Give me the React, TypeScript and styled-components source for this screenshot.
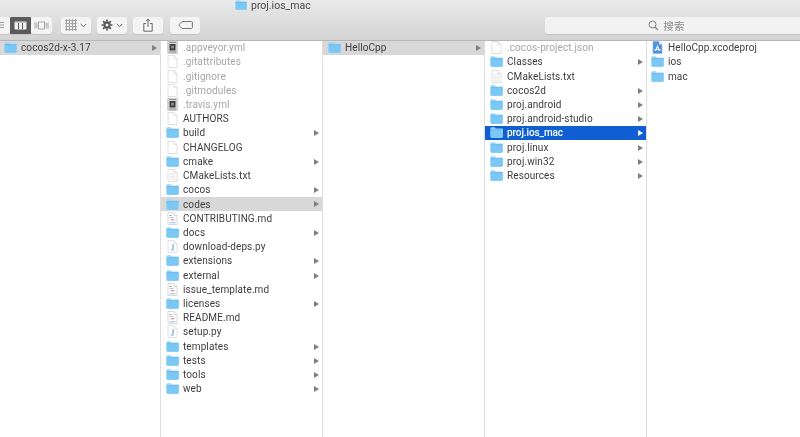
import React from "react";
import styled, { createGlobalStyle } from "styled-components";

const Global = createGlobalStyle`
  html, body { margin: 0; padding: 0; background: #fff; }
  body { font-family: Roboto, "Liberation Sans", Arial, "Noto Sans CJK SC", sans-serif; }
`;

const Win = styled.div`
  width: 800px; height: 437px; overflow: hidden; display: flex; flex-direction: column; background: #fff;
  filter: blur(.3px);
`;
const Toolbar = styled.header`
  height: 40.5px; flex: none; box-sizing: border-box; border-bottom: 1px solid #b8b7b8;
  background: linear-gradient(#ebeaeb, #d4d3d4);
  display: flex; flex-direction: column;
`;
const Title = styled.div`
  height: 16.5px; flex: none; display: flex; align-items: flex-start; gap: 4px; padding-left: 235px;
  font-size: 10.5px; line-height: 11px; color: #4a4a4a;
`;
const Tools = styled.div`
  display: flex; align-items: flex-start; height: 17.5px;
`;
const Btn = styled.div<{ $w: number; $ml: number; $active?: boolean; $start?: boolean }>`
  width: ${p => p.$w}px; margin-left: ${p => p.$ml}px; height: 17.5px; box-sizing: border-box;
  display: flex; align-items: center; justify-content: ${p => p.$start ? "flex-start" : "center"}; gap: 3px;
  border-radius: ${p => p.$active ? 1 : 3}px; background: ${p => p.$active ? "#5c5b5c" : "#f5f4f5"};
  box-shadow: 0 1px 0 #c4c3c4;
  color: #666;
`;
const Search = styled.div`
  margin-left: auto; width: 255px; height: 17.5px; border-radius: 3px 0 0 3px; background: #f3f2f3;
  box-shadow: 0 1px 0 #c4c3c4; box-sizing: border-box; padding-right: 12px;
  display: flex; align-items: center; justify-content: center; gap: 4px;
  font-size: 10.5px; color: #8a8a8a; letter-spacing: .3px;
`;
const Browser = styled.main`
  flex: 1; display: flex; min-height: 0;
`;
const Column = styled.section<{ $w: number }>`
  width: ${p => p.$w}px; flex: none; box-sizing: border-box; border-right: 1px solid #dedede;
  &:last-child { border-right: none; flex: 1; }
`;
const Row = styled.div<{ $state?: "sel" | "active"; $inset: number }>`
  height: 14.23px; display: flex; align-items: center; position: relative; box-sizing: border-box;
  padding-left: ${p => p.$inset}px; gap: 4px;
  background: ${p => p.$state === "sel" ? "#0f5fd3" : p.$state === "active" ? "#d8d8d8" : "transparent"};
`;
const Name = styled.span<{ $dim?: boolean; $sel?: boolean }>`
  font-size: 10px; line-height: 14px; letter-spacing: ${p => p.$sel ? "-.1px" : ".1px"}; white-space: nowrap;
  color: ${p => p.$sel ? "#fff" : p.$dim ? "#a6a6a6" : "#3d3d3d"};
  font-weight: ${p => p.$sel ? 500 : 400};
  position: relative; top: .5px;
`;
const Arrow = styled.i<{ $sel?: boolean }>`
  position: absolute; right: 3px; top: 4.5px; width: 0; height: 0;
  border-left: 5px solid ${p => p.$sel ? "#fff" : "#808080"};
  border-top: 3px solid transparent; border-bottom: 3px solid transparent;
`;

type Kind = "folder" | "doc" | "text" | "md" | "py" | "yml" | "xcode";

const FolderIcon = ({ w = 13, h = 11 }: { w?: number; h?: number }) => (
  <svg width={w} height={h} viewBox="0 0 13 11" style={{ flex: "none" }}>
    <path d="M.5 1.2C.5.6.9.3 1.4.3h3c.5 0 .7.2 1 .6l.4.6h6c.7 0 1.2.4 1.2 1.1v7c0 .7-.4 1.1-1.1 1.1H1.6C.9 10.7.5 10.3.5 9.6z" fill="#9ad5f7" />
    <path d="M.5 3h12v6.6c0 .7-.4 1.1-1.1 1.1H1.6C.9 10.7.5 10.3.5 9.6z" fill="#7cc8f5" />
    <rect x=".5" y="2.2" width="12" height="1" fill="#68baee" />
  </svg>
);

const Sheet = ({ children, stroke = "#d8d8d8" }: { children?: React.ReactNode; stroke?: string }) => (
  <svg width="11" height="13" viewBox="0 0 11 13" style={{ flex: "none", margin: "0 1px" }}>
    <path d="M1 .5h6l3 3v9H1z" fill="#fff" stroke={stroke} strokeWidth=".8" />
    <path d="M7 .5v3h3" fill="#f2f2f2" stroke={stroke} strokeWidth=".7" />
    {children}
  </svg>
);

const Icon = ({ kind }: { kind: Kind }) => {
  switch (kind) {
    case "folder": return <FolderIcon />;
    case "doc": return <Sheet />;
    case "text":
      return <Sheet><path d="M2.5 4.5h6M2.5 6h6M2.5 7.5h6M2.5 9h6M2.5 10.5h6" stroke="#e2e2e2" strokeWidth=".7" /></Sheet>;
    case "md":
      return <Sheet stroke="#cfcfcf"><path d="M2.5 3.5h2" stroke="#8a8a8a" strokeWidth=".9" /><path d="M2.5 5.5h4" stroke="#aab0c4" strokeWidth=".8" /><path d="M3 7l2.5 2L8 7z" fill="#d9a0b4" /><path d="M2.5 10.8h6" stroke="#8fb0dc" strokeWidth=".9" /></Sheet>;
    case "py":
      return <Sheet stroke="#d6dce2"><path d="M6 5v4.5c0 .8-.8 1-1.6.6" fill="none" stroke="#4a96d8" strokeWidth="1" /><path d="M5.6 4.6h1.2" stroke="#4a96d8" strokeWidth=".8" /></Sheet>;
    case "yml":
      return (
        <svg width="11" height="13" viewBox="0 0 11 13" style={{ flex: "none", margin: "0 1px" }}>
          <rect x=".8" y=".5" width="9.4" height="12" fill="#d6d6d6" stroke="#aaa" strokeWidth=".5" />
          <rect x="2.5" y="3" width="6" height="6.5" fill="#3e3e3e" />
          <rect x="4" y="4.8" width="3" height="2.6" fill="#8a8a8a" />
          <path d="M2 1.5h7M2 11h7" stroke="#777" strokeWidth=".7" />
        </svg>
      );
    case "xcode":
      return (
        <svg width="11" height="13" viewBox="0 0 11 13" style={{ flex: "none", margin: "0 1px" }}>
          <path d="M1 .5h6l3 3v9H1z" fill="#4d8fe0" stroke="#8db7ea" strokeWidth=".7" />
          <path d="M7 .5v3h3z" fill="#d9e8fa" />
          <path d="M5.5 3.5L3 10h1.2l1.3-3.6L6.8 10H8z" fill="#fff" />
          <path d="M2.2 8.5h6.6" stroke="#fff" strokeWidth=".7" />
        </svg>
      );
  }
};

type Entry = { n: string; k: Kind; dim?: boolean; arrow?: boolean; state?: "sel" | "active" };
const f = (n: string, state?: "sel" | "active"): Entry => ({ n, k: "folder", arrow: true, state });

const columns: { w: number; inset: number; rows: Entry[] }[] = [
  { w: 161, inset: 4, rows: [f("cocos2d-x-3.17", "active")] },
  {
    w: 162, inset: 5, rows: [
      { n: ".appveyor.yml", k: "yml", dim: true },
      { n: ".gitattributes", k: "doc", dim: true },
      { n: ".gitignore", k: "doc", dim: true },
      { n: ".gitmodules", k: "doc", dim: true },
      { n: ".travis.yml", k: "yml", dim: true },
      { n: "AUTHORS", k: "doc" },
      f("build"),
      { n: "CHANGELOG", k: "doc" },
      f("cmake"),
      { n: "CMakeLists.txt", k: "text" },
      f("cocos"),
      f("codes", "active"),
      { n: "CONTRIBUTING.md", k: "md" },
      f("docs"),
      { n: "download-deps.py", k: "py" },
      f("extensions"),
      f("external"),
      { n: "issue_template.md", k: "md" },
      f("licenses"),
      { n: "README.md", k: "md" },
      { n: "setup.py", k: "py" },
      f("templates"),
      f("tests"),
      f("tools"),
      f("web"),
    ],
  },
  { w: 162, inset: 5, rows: [f("HelloCpp", "active")] },
  {
    w: 162, inset: 5, rows: [
      { n: ".cocos-project.json", k: "doc", dim: true },
      f("Classes"),
      { n: "CMakeLists.txt", k: "text" },
      f("cocos2d"),
      f("proj.android"),
      f("proj.android-studio"),
      f("proj.ios_mac", "sel"),
      f("proj.linux"),
      f("proj.win32"),
      f("Resources"),
    ],
  },
  {
    w: 153, inset: 4, rows: [
      { n: "HelloCpp.xcodeproj", k: "xcode" },
      { n: "ios", k: "folder" },
      { n: "mac", k: "folder" },
    ],
  },
];

const Stroke = { fill: "none", stroke: "#666", strokeWidth: 1 };

export default function App() {
  return (
    <Win>
      <Global />
      <Toolbar>
        <Title><FolderIcon w={12} h={10} /><span>proj.ios_mac</span></Title>
        <Tools>
          <Btn $w={14} $ml={-4} $start>
            <svg width="8" height="8" viewBox="0 0 8 8"><path d="M0 1.5h8M0 4h8M0 6.5h8" {...Stroke} stroke="#999" /></svg>
          </Btn>
          <Btn $w={21} $ml={0} $active>
            <svg width="13" height="9" viewBox="0 0 13 9"><rect x=".5" y=".5" width="12" height="8" rx="1" fill="#f0f0f0" /><path d="M4.5 2v6M8.5 2v6" stroke="#5c5b5c" strokeWidth="1" /><path d="M1 1.5h11" stroke="#bbb" strokeWidth=".8" /></svg>
          </Btn>
          <Btn $w={21} $ml={0}>
            <svg width="15" height="9" viewBox="0 0 15 9"><rect x="4.5" y="1" width="6" height="7" {...Stroke} stroke="#a8a8a8" /><path d="M1 1.5v6M2.8 1.5v6M12.2 1.5v6M14 1.5v6" {...Stroke} stroke="#a8a8a8" /></svg>
          </Btn>
          <Btn $w={30} $ml={9}>
            <svg width="12" height="12" viewBox="0 0 12 12"><path d="M0 1.5h12M0 4.5h12M0 7.5h12M0 10.5h12M1.5 0v12M4.5 0v12M7.5 0v12M10.5 0v12" fill="none" stroke="#a8a8a8" strokeWidth="1.2" /></svg>
            <svg width="7" height="5" viewBox="0 0 7 5"><path d="M.8 1l2.7 2.7L6.2 1" {...Stroke} /></svg>
          </Btn>
          <Btn $w={30} $ml={6}>
            <svg width="12" height="12" viewBox="0 0 12 12"><circle cx="6" cy="6" r="2.6" fill="none" stroke="#555" strokeWidth="2.2" /><path d="M6 .5v2M6 9.5v2M.5 6h2M9.5 6h2M2.1 2.1l1.4 1.4M8.5 8.5l1.4 1.4M2.1 9.9l1.4-1.4M8.5 3.5l1.4-1.4" stroke="#555" strokeWidth="1.7" /></svg>
            <svg width="7" height="5" viewBox="0 0 7 5"><path d="M.8 1l2.7 2.7L6.2 1" {...Stroke} /></svg>
          </Btn>
          <Btn $w={30} $ml={6}>
            <svg width="10" height="14" viewBox="0 0 10 14"><path d="M3 5.5H.8v7.7h8.4V5.5H7" {...Stroke} /><path d="M5 9V1M3 3l2-2 2 2" {...Stroke} /></svg>
          </Btn>
          <Btn $w={30} $ml={7}>
            <svg width="15" height="8" viewBox="0 0 15 8"><path d="M4 .5h9.5c.5 0 .9.4.9.9v5.2c0 .5-.4.9-.9.9H4L.8 4z" {...Stroke} stroke="#777" /></svg>
          </Btn>
          <Search>
            <svg width="11" height="11" viewBox="0 0 11 11"><circle cx="4.5" cy="4.5" r="3.5" fill="none" stroke="#808080" strokeWidth="1" /><path d="M7 7l3.2 3.2" stroke="#808080" strokeWidth="1.2" /></svg>
            <span>搜索</span>
          </Search>
        </Tools>
      </Toolbar>
      <Browser>
        {columns.map((c, i) => (
          <Column key={i} $w={c.w}>
            {c.rows.map(r => (
              <Row key={r.n} $state={r.state} $inset={c.inset}>
                <Icon kind={r.k} />
                <Name $dim={r.dim} $sel={r.state === "sel"}>{r.n}</Name>
                {r.arrow && <Arrow $sel={r.state === "sel"} />}
              </Row>
            ))}
          </Column>
        ))}
      </Browser>
    </Win>
  );
}
